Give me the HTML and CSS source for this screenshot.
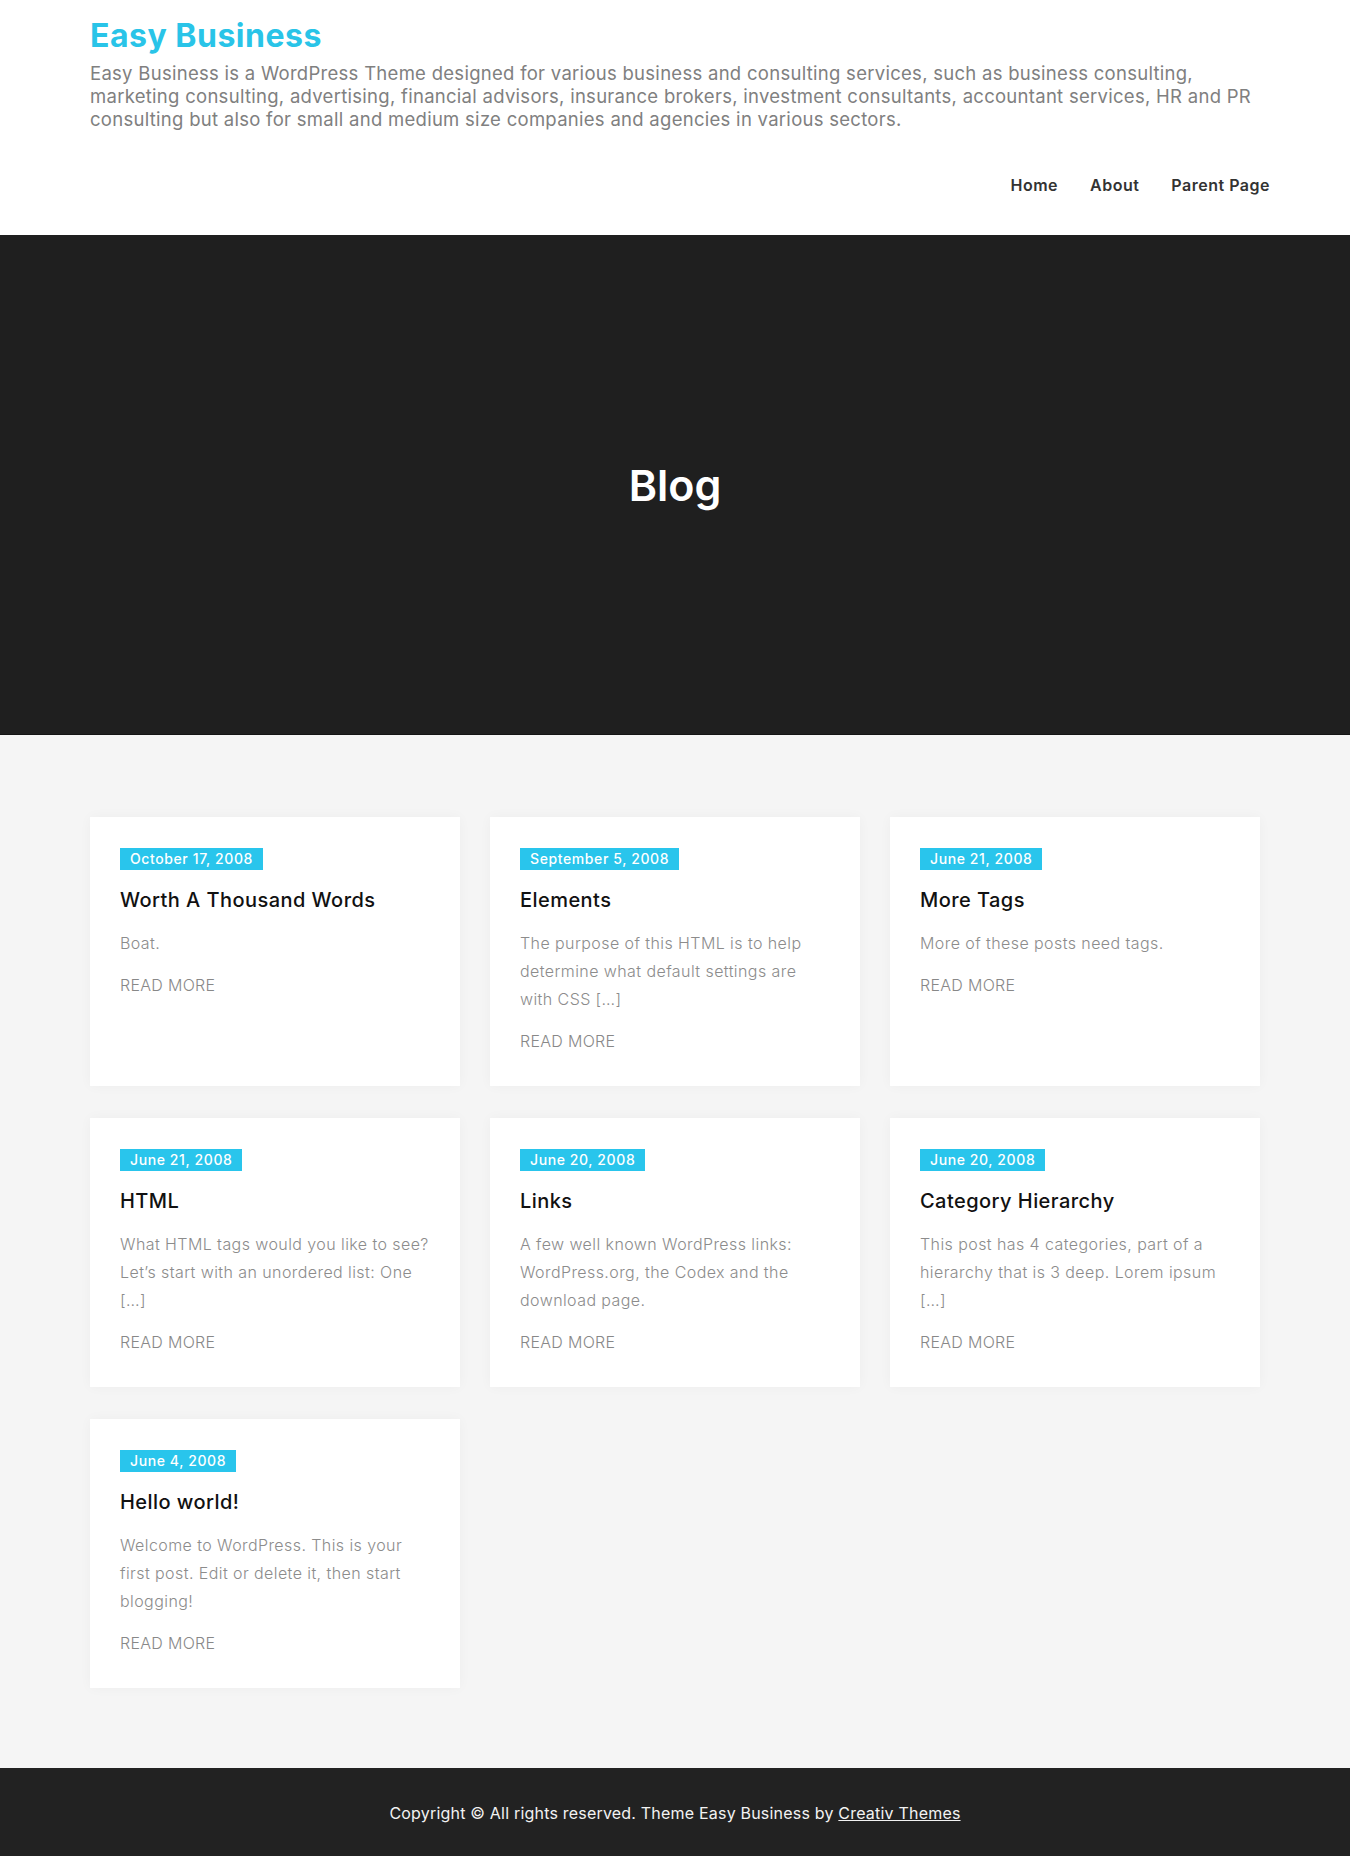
FILE: index.html
```html
<!DOCTYPE html>
<html lang="en">
<head>
<meta charset="utf-8">
<title>Blog – Easy Business</title>
<link rel="stylesheet" href="styles.css">
</head>
<body>
<header class="site-header">
  <div class="container">
    <div class="branding">
      <h1 class="site-title">Easy Business</h1>
      <p class="site-desc">Easy Business is a WordPress Theme designed for various business and consulting services, such as business consulting, marketing consulting, advertising, financial advisors, insurance brokers, investment consultants, accountant services, HR and PR consulting but also for small and medium size companies and agencies in various sectors.</p>
    </div>
    <nav class="main-nav">
      <a href="#">Home</a>
      <a href="#">About</a>
      <a href="#">Parent Page</a>
    </nav>
  </div>
</header>

<section class="hero">
  <h2 class="hero-title">Blog</h2>
</section>

<main class="content">
  <div class="container grid">
    <article class="card">
      <span class="date">October 17, 2008</span>
      <h3 class="card-title">Worth A Thousand Words</h3>
      <p class="excerpt">Boat.</p>
      <a class="more" href="#">READ MORE</a>
    </article>
    <article class="card">
      <span class="date">September 5, 2008</span>
      <h3 class="card-title">Elements</h3>
      <p class="excerpt">The purpose of this HTML is to help determine what default settings are with CSS […]</p>
      <a class="more" href="#">READ MORE</a>
    </article>
    <article class="card">
      <span class="date">June 21, 2008</span>
      <h3 class="card-title">More Tags</h3>
      <p class="excerpt">More of these posts need tags.</p>
      <a class="more" href="#">READ MORE</a>
    </article>
    <article class="card">
      <span class="date">June 21, 2008</span>
      <h3 class="card-title">HTML</h3>
      <p class="excerpt">What HTML tags would you like to see? Let’s start with an unordered list: One […]</p>
      <a class="more" href="#">READ MORE</a>
    </article>
    <article class="card">
      <span class="date">June 20, 2008</span>
      <h3 class="card-title">Links</h3>
      <p class="excerpt">A few well known WordPress links: WordPress.org, the Codex and the download page.</p>
      <a class="more" href="#">READ MORE</a>
    </article>
    <article class="card">
      <span class="date">June 20, 2008</span>
      <h3 class="card-title">Category Hierarchy</h3>
      <p class="excerpt">This post has 4 categories, part of a hierarchy that is 3 deep. Lorem ipsum […]</p>
      <a class="more" href="#">READ MORE</a>
    </article>
    <article class="card">
      <span class="date">June 4, 2008</span>
      <h3 class="card-title">Hello world!</h3>
      <p class="excerpt">Welcome to WordPress. This is your first post. Edit or delete it, then start blogging!</p>
      <a class="more" href="#">READ MORE</a>
    </article>
  </div>
</main>

<footer class="site-footer">
  <p>Copyright © All rights reserved. Theme Easy Business by <a href="#">Creativ Themes</a></p>
</footer>
</body>
</html>
```

FILE: styles.css
```css
* { box-sizing: border-box; }

body {
  margin: 0;
  font-family: Inter, "Open Sans", "Liberation Sans", sans-serif;
  color: #333;
  background: #fff;
}

a { text-decoration: none; color: inherit; }

.container {
  width: 1170px;
  margin: 0 auto;
}

/* Header */
.site-header {
  background: #fff;
  padding: 18px 0 38px;
}

.site-title {
  margin: 0;
  font-size: 32px;
  line-height: 36px;
  font-weight: 700;
  color: #29c4e8;
  letter-spacing: 0.5px;
}

.site-desc {
  margin: 8px 0 0;
  font-size: 18.5px;
  line-height: 23px;
  font-weight: 400;
  color: #808080;
  letter-spacing: 0.28px;
}

.main-nav {
  display: flex;
  justify-content: flex-end;
  gap: 32px;
  margin-top: 42px;
  margin-right: -10px;
}

.main-nav a {
  font-size: 16px;
  line-height: 24px;
  font-weight: 600;
  color: #333;
  letter-spacing: 0.5px;
}

/* Hero */
.hero {
  height: 500px;
  background: #1f1f1f;
  border-bottom: 1px solid #141414;
  display: flex;
  align-items: center;
  justify-content: center;
}

.hero-title {
  margin: 0;
  font-size: 43px;
  line-height: 50px;
  font-weight: 600;
  color: #fff;
}

/* Content */
.content {
  background: #f5f5f5;
  padding: 82px 0 80px;
}

.grid {
  display: grid;
  grid-template-columns: repeat(3, 370px);
  column-gap: 30px;
  row-gap: 32px;
  align-items: stretch;
}

.card {
  background: #fff;
  padding: 31px 30px 33px;
  box-shadow: 0 0 12px rgba(0, 0, 0, 0.035);
  display: flex;
  flex-direction: column;
  align-items: flex-start;
}

.date {
  display: inline-block;
  background: #29c5ec;
  color: #fff;
  font-size: 14px;
  line-height: 22px;
  font-weight: 500;
  padding: 0 10px;
  letter-spacing: 0.6px;
}

.card-title {
  margin: 15px 0 0;
  font-size: 20px;
  line-height: 30px;
  font-weight: 500;
  color: #111;
  letter-spacing: 0.45px;
}

.excerpt {
  margin: 14px 0 0;
  font-size: 16px;
  line-height: 28px;
  font-weight: 300;
  color: #8c8c8c;
  letter-spacing: 0.42px;
}

.more {
  margin-top: 16px;
  font-size: 16px;
  line-height: 24px;
  font-weight: 300;
  color: #888;
  letter-spacing: 0.3px;
}

/* Footer */
.site-footer {
  background: #222;
  height: 90px;
  display: flex;
  align-items: center;
  justify-content: center;
}

.site-footer p {
  margin: 0;
  font-size: 16px;
  line-height: 24px;
  color: #f2f2f2;
  letter-spacing: 0.2px;
}

.site-footer a {
  text-decoration: underline;
}
```
